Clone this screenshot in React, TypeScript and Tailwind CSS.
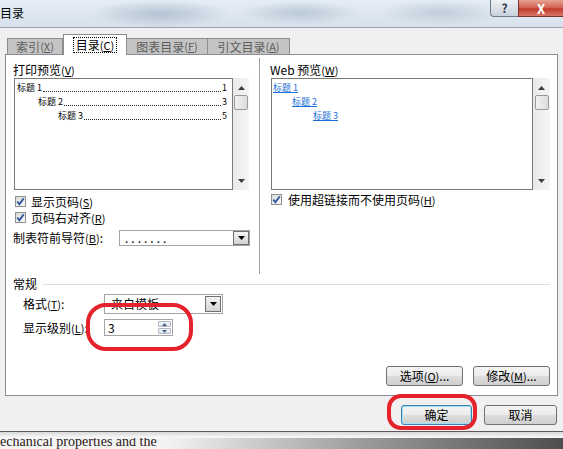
import React from 'react';

const font = "font-['Noto_Sans_CJK_SC','Noto_Sans',sans-serif]";

function Mn({ k }: { k: string }) {
  return (
    <span className="text-[11px]">
      (<span className="underline">{k}</span>)
    </span>
  );
}

function CheckBox() {
  return (
    <svg width="11" height="11" viewBox="0 0 11 11" className="shrink-0">
      <defs>
        <linearGradient id="cbg" x1="0" y1="0" x2="1" y2="1">
          <stop offset="0" stopColor="#d8d8d8" />
          <stop offset="1" stopColor="#fbfbfb" />
        </linearGradient>
      </defs>
      <rect x="0.5" y="0.5" width="10" height="10" fill="url(#cbg)" stroke="#8e8f8f" />
      <path d="M2.3 5.6 L4.4 8.2 L8.7 2.4" fill="none" stroke="#2c57a0" strokeWidth="1.8" />
    </svg>
  );
}

function DropArrow() {
  return (
    <div className="w-[16px] h-full border border-[#707070] bg-[linear-gradient(#f4f4f4,#d4d4d4)] flex items-center justify-center">
      <svg width="7" height="4" viewBox="0 0 7 4">
        <path d="M0 0 H7 L3.5 4 Z" fill="#000" />
      </svg>
    </div>
  );
}

function ScrollBar({ w }: { w: string }) {
  return (
    <div className={`${w} h-[112px] bg-[linear-gradient(90deg,#e9e9e9,#f5f5f5)] flex flex-col items-center`}>
      <svg width="7" height="4" viewBox="0 0 7 4" className="mt-[8px]">
        <path d="M0 4 H7 L3.5 0 Z" fill="#3d3d3d" />
      </svg>
      <div className="mt-[5px] w-[14px] h-[15px] border border-[#9a9a9a] rounded-[2px] bg-[linear-gradient(90deg,#f2f2f2,#dcdcdc)]" />
      <div className="flex-1" />
      <svg width="7" height="4" viewBox="0 0 7 4" className="mb-[7px]">
        <path d="M0 0 H7 L3.5 4 Z" fill="#3d3d3d" />
      </svg>
    </div>
  );
}

function Btn({ children, w, def }: { children: React.ReactNode; w: string; def?: boolean }) {
  return (
    <div
      className={`${w} h-[20px] rounded-[3px] border ${
        def ? 'border-[#3c7fb1] shadow-[inset_0_0_0_1px_#9be1f7]' : 'border-[#707070]'
      } bg-[linear-gradient(#f4f4f4_0%,#ebebeb_50%,#dddddd_51%,#cfcfcf_100%)] flex items-center justify-center text-[12px] text-black`}
    >
      {children}
    </div>
  );
}

export default function App() {
  const print = [
    { label: '标题 1', page: '1', indent: 'pl-[2px]' },
    { label: '标题 2', page: '3', indent: 'pl-[23px]' },
    { label: '标题 3', page: '5', indent: 'pl-[43px]' },
  ];
  const web = [
    { label: '标题 1', indent: 'pl-[1px]' },
    { label: '标题 2', indent: 'pl-[20px]' },
    { label: '标题 3', indent: 'pl-[41px]' },
  ];

  return (
    <div className={`${font} relative w-[563px] h-[449px] overflow-hidden bg-[#f0f0f0] text-black flex flex-col`}>
      {/* title bar */}
      <div className="h-[28px] shrink-0 flex border-b border-[#9aa6b2] bg-[radial-gradient(70px_14px_at_160px_14px,#b3c2d2,transparent),radial-gradient(60px_12px_at_300px_13px,#bac8d6,transparent),radial-gradient(60px_13px_at_440px_13px,#c2cedb,transparent),linear-gradient(#e4ecf4,#d8e2ec)]">
        <div className="text-[12px] leading-[26px]">目录</div>
        <div className="flex-1" />
        <div className="w-[28px] h-[17px] rounded-bl-[4px] border border-t-0 border-r-0 border-[#6d7b8a] bg-[linear-gradient(#eef2f6,#c9d2dc)] flex items-center justify-center text-[12px] font-bold text-[#2e3a48] leading-none">
          ?
        </div>
        <div className="w-[45px] h-[17px] border-l border-b border-[#7a3328] bg-[linear-gradient(#e7a293,#d2604e_50%,#c0392b_55%,#d9786a)] flex items-center justify-center text-[13px] font-bold text-white leading-none">
          X
        </div>
      </div>

      {/* tabs */}
      <div className="mt-[6px] h-[20px] pl-[7px] flex items-end shrink-0 text-[12px]">
        <div className="w-[56px] h-[16px] border border-b-0 border-[#8c8c8c] bg-[#c4c4c4] text-[#5c5c5c] flex items-center justify-center leading-none">
          索引<Mn k="X" />
        </div>
        <div className="relative z-10 -mb-px w-[64px] h-[21px] border border-b-0 border-[#8c8c8c] bg-white flex items-center justify-center">
          <div className="px-[2px] border border-dotted border-black leading-[14px]">
            目录<Mn k="C" />
          </div>
        </div>
        <div className="w-[81px] h-[16px] border border-b-0 border-l-0 border-[#8c8c8c] bg-[#c4c4c4] text-[#5c5c5c] flex items-center justify-center leading-none">
          图表目录<Mn k="F" />
        </div>
        <div className="w-[82px] h-[16px] border border-b-0 border-l-0 border-[#8c8c8c] bg-[#c4c4c4] text-[#5c5c5c] flex items-center justify-center leading-none">
          引文目录<Mn k="A" />
        </div>
      </div>

      {/* panel */}
      <div className="ml-[5px] w-[553px] h-[342px] shrink-0 border border-[#898c95] bg-white flex flex-col text-[12px]">
        <div className="flex pt-[8px]">
          {/* left column */}
          <div className="ml-[7px] w-[237px] flex flex-col">
            <div className="h-[14px] leading-[14px]">
              打印预览<Mn k="V" />
            </div>
            <div className="mt-[1px] ml-[1px] flex">
              <div className="w-[219px] h-[112px] border border-[#7a7a7a] pt-[2px] text-[9px] leading-[14px]">
                {print.map((p) => (
                  <div key={p.label} className={`${p.indent} pr-[5px] flex items-end`}>
                    <span className="whitespace-nowrap">{p.label}</span>
                    <span className="flex-1 mx-[1px] mb-[3px] border-b border-dotted border-[#222]" />
                    <span>{p.page}</span>
                  </div>
                ))}
              </div>
              <ScrollBar w="w-[16px]" />
            </div>
            <div className="mt-[5px] h-[13px] flex items-center pl-[2px]">
              <CheckBox />
              <span className="ml-[5px] leading-none">
                显示页码<Mn k="S" />
              </span>
            </div>
            <div className="mt-[3px] h-[13px] flex items-center pl-[2px]">
              <CheckBox />
              <span className="ml-[5px] leading-none">
                页码右对齐<Mn k="R" />
              </span>
            </div>
            <div className="mt-[6px] h-[16px] flex items-center">
              <span className="w-[106px] leading-none">
                制表符前导符<Mn k="B" />:
              </span>
              <div className="w-[131px] h-[16px] border border-[#a4a4a4] flex">
                <div className="flex-1 pl-[5px] leading-[14px] tracking-[3px]">.......</div>
                <DropArrow />
              </div>
            </div>
          </div>

          {/* divider */}
          <div className="ml-[9px] -mt-[5px] w-px h-[216px] bg-[#a0a0a0]" />

          {/* right column */}
          <div className="ml-[10px] w-[281px] flex flex-col">
            <div className="h-[14px] leading-[14px]">
              Web 预览<Mn k="W" />
            </div>
            <div className="mt-[1px] ml-[1px] flex">
              <div className="w-[262px] h-[112px] border border-[#7a7a7a] pt-[2px] text-[9px] leading-[14px] text-[#1a6fd6]">
                {web.map((p) => (
                  <div key={p.label} className={p.indent}>
                    <span className="underline">{p.label}</span>
                  </div>
                ))}
              </div>
              <ScrollBar w="w-[17px]" />
            </div>
            <div className="mt-[3px] h-[13px] flex items-center pl-[1px]">
              <CheckBox />
              <span className="ml-[6px] leading-none">
                使用超链接而不使用页码<Mn k="H" />
              </span>
            </div>
          </div>
        </div>

        {/* general */}
        <div className="mt-[3px] h-[14px] flex items-center pl-[7px] pr-[7px]">
          <span className="leading-none">常规</span>
          <div className="ml-[6px] flex-1 h-px bg-[#d5dfe5]" />
        </div>
        <div className="mt-[3px] h-[20px] flex items-center pl-[17px]">
          <span className="w-[81px] leading-none">
            格式<Mn k="T" />:
          </span>
          <div className="w-[119px] h-[20px] border border-[#a4a4a4] flex p-[1px]">
            <div className="flex-1 pl-[5px] leading-[16px]">来自模板</div>
            <DropArrow />
          </div>
        </div>
        <div className="mt-[5px] h-[17px] flex items-center pl-[17px]">
          <span className="w-[81px] leading-none">
            显示级别<Mn k="L" />:
          </span>
          <div className="w-[69px] h-[17px] border border-[#a4a4a4] flex">
            <div className="flex-1 pl-[3px] leading-[15px]">3</div>
            <div className="w-[15px] flex flex-col p-px gap-px">
              <div className="flex-1 border border-[#b2b9c4] rounded-[1px] bg-[linear-gradient(#f3f6f9,#dde4ec)] flex items-center justify-center">
                <svg width="5" height="3" viewBox="0 0 5 3">
                  <path d="M0 3 H5 L2.5 0 Z" fill="#4d6185" />
                </svg>
              </div>
              <div className="flex-1 border border-[#b2b9c4] rounded-[1px] bg-[linear-gradient(#f3f6f9,#dde4ec)] flex items-center justify-center">
                <svg width="5" height="3" viewBox="0 0 5 3">
                  <path d="M0 0 H5 L2.5 3 Z" fill="#4d6185" />
                </svg>
              </div>
            </div>
          </div>
        </div>
        <div className="mt-[30px] flex justify-end gap-[10px] pr-[7px]">
          <Btn w="w-[77px]">
            选项<Mn k="O" />...
          </Btn>
          <Btn w="w-[77px]">
            修改<Mn k="M" />...
          </Btn>
        </div>
      </div>

      {/* dialog buttons */}
      <div className="mt-[9px] flex justify-end gap-[12px] pr-[6px] shrink-0">
        <Btn w="w-[71px]" def>
          确定
        </Btn>
        <Btn w="w-[73px]">取消</Btn>
      </div>

      {/* bottom edge of dialog and document behind */}
      <div className="mt-[6px] h-px bg-[#5a5a5a] shrink-0" />
      <div className="h-[6px] shrink-0 bg-[linear-gradient(#d8d8d8,#fafafa)]" />
      <div className="flex-1 overflow-hidden bg-[linear-gradient(90deg,#f6f6f6_0%,#f2f2f2_30%,#9a9a9a_65%,#4e4e4e_100%)]">
        <div className="-mt-[4px] font-['Liberation_Serif',serif] text-[14px] leading-[16px] text-[#2a1515] whitespace-nowrap">
          echanical properties and the
        </div>
      </div>

      {/* red marks drawn over the dialog */}
      <div className="absolute left-[86px] top-[303px] w-[107px] h-[48px] border-[4px] border-[#e5222c] rounded-[20px]" />
      <div className="absolute left-[387px] top-[394px] w-[90px] h-[36px] border-[4px] border-[#e5222c] rounded-[14px]" />
    </div>
  );
}
